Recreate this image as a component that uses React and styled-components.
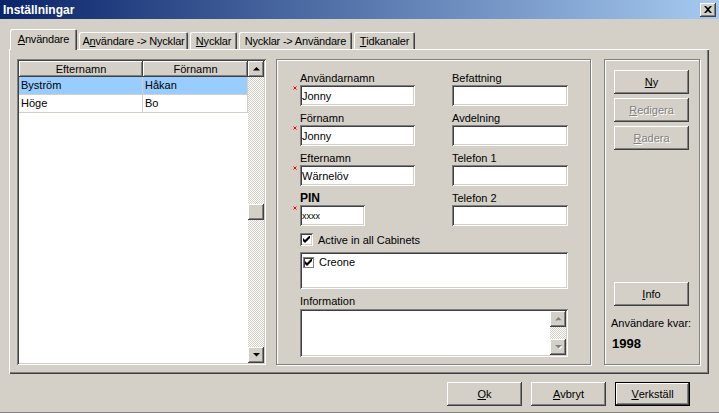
import React from "react"
import styled, { createGlobalStyle, css } from "styled-components"

const face = "#d4d0c8"
const shadow = "#808080"
const dark = "#404040"

const GlobalStyle = createGlobalStyle`
  html, body {
    margin: 0;
    padding: 0;
    background: ${face};
  }
  body {
    font-family: "Liberation Sans", Arial, sans-serif;
    font-size: 11px;
    color: #000;
  }
`

const raised = css`
  box-shadow: inset -1px -1px 0 ${dark}, inset 1px 1px 0 #fff, inset -2px -2px 0 ${shadow};
`

const sunken = css`
  box-shadow: inset 1px 1px 0 ${shadow}, inset -1px -1px 0 #fff, inset 2px 2px 0 ${dark}, inset -2px -2px 0 ${face};
`

const etched = css`
  border: 1px solid ${shadow};
  box-shadow: inset 1px 1px 0 #fff, 1px 1px 0 #fff;
`

const checkered = css`
  background: repeating-conic-gradient(${face} 0% 25%, #fff 0% 50%) 0 0 / 2px 2px;
`

const Window = styled.div`
  width: 719px;
  height: 413px;
  box-sizing: border-box;
  background: ${face};
  border-bottom: 1px solid ${shadow};
  display: flex;
  flex-direction: column;
`

const TitleBar = styled.div`
  height: 19px;
  flex: none;
  display: flex;
  align-items: center;
  justify-content: space-between;
  padding: 0 3px 0 3px;
  background: linear-gradient(to right, #0a246a, #a6caf0);
`

const Title = styled.span`
  color: #fff;
  font-weight: bold;
  font-size: 12px;
`

const CloseButton = styled.div`
  width: 16px;
  height: 14px;
  background: ${face};
  ${raised}
  display: flex;
  align-items: center;
  justify-content: center;
`

const Body = styled.div`
  flex: 1;
  display: flex;
  flex-direction: column;
  padding: 10px 10px 0 9px;
`

const TabStrip = styled.div`
  height: 20px;
  display: flex;
  align-items: flex-end;
  gap: 2px;
  padding-left: 1px;
  letter-spacing: -0.2px;
`

const Tab = styled.div`
  width: ${p => p.$w}px;
  height: ${p => (p.$active ? 21 : 17)}px;
  margin-bottom: ${p => (p.$active ? -1 : 0)}px;
  position: relative;
  z-index: ${p => (p.$active ? 1 : 0)};
  box-sizing: border-box;
  padding-bottom: ${p => (p.$active ? 2 : 0)}px;
  background: ${face};
  border-radius: 2px 2px 0 0;
  box-shadow: inset 1px 1px 0 #fff, inset -1px 0 0 ${dark}, inset -2px 0 0 ${shadow};
  display: flex;
  align-items: center;
  justify-content: center;
  white-space: nowrap;
`

const TabPanel = styled.div`
  height: 325px;
  box-sizing: border-box;
  padding: 10px 9px 9px 8px;
  box-shadow: inset 1px 1px 0 #fff, inset -1px -1px 0 ${dark}, inset -2px -2px 0 ${shadow};
  display: flex;
`

/* user list */

const UserList = styled.div`
  width: 249px;
  margin-right: 10px;
  box-sizing: border-box;
  padding: 2px;
  background: #fff;
  ${sunken}
  display: flex;
`

const Grid = styled.div`
  flex: 1;
  display: flex;
  flex-direction: column;
`

const HeaderRow = styled.div`
  display: flex;
  height: 16px;
`

const HeaderCell = styled.div`
  width: ${p => p.$w}px;
  box-sizing: border-box;
  background: ${face};
  ${raised}
  text-align: center;
  line-height: 16px;
`

const Row = styled.div`
  display: flex;
  height: 18px;
  background: ${p => (p.$selected ? "#99ccff" : "#fff")};
`

const Cell = styled.div`
  width: ${p => p.$w}px;
  box-sizing: border-box;
  padding-left: 2px;
  line-height: 17px;
  border-right: 1px solid ${face};
  border-bottom: 1px solid ${face};
`

const ScrollBar = styled.div`
  width: 16px;
  display: flex;
  flex-direction: column;
`

const ScrollButton = styled.div`
  width: 16px;
  height: 16px;
  flex: none;
  box-sizing: border-box;
  background: ${face};
  ${raised}
  display: flex;
  align-items: center;
  justify-content: center;
`

const Track = styled.div`
  flex: 1;
  ${checkered}
  display: flex;
  flex-direction: column;
`

const Thumb = styled.div`
  width: 16px;
  height: 16px;
  margin-top: ${p => p.$offset}px;
  background: ${face};
  ${raised}
`

/* form */

const FormGroup = styled.div`
  width: 315px;
  margin-right: 13px;
  box-sizing: border-box;
  ${etched}
  padding: 12px 0 0 23px;
  display: flex;
  flex-direction: column;
`

const FieldGrid = styled.div`
  display: grid;
  grid-template-columns: 115px 116px;
  column-gap: 37px;
  row-gap: 6px;
`

const Field = styled.div`
  display: flex;
  flex-direction: column;
`

const Label = styled.div`
  height: 13px;
  line-height: 13px;
  font-size: ${p => (p.$bold ? 12 : 11)}px;
  font-weight: ${p => (p.$bold ? "bold" : "normal")};
  white-space: nowrap;
`

const InputRow = styled.div`
  display: flex;
  margin-left: ${p => (p.$required ? -7 : 0)}px;
`

const Req = styled.svg`
  width: 7px;
  height: 5px;
  flex: none;
  margin-top: 1px;
`

const TextBox = styled.input`
  width: ${p => p.$w || 115}px;
  height: 21px;
  box-sizing: border-box;
  border: 0;
  outline: none;
  margin: 0;
  padding: 1px 0 0 2px;
  background: #fff;
  ${sunken}
  font-family: inherit;
  font-size: ${p => (p.$small ? 9 : 11)}px;
  color: #000;
`

const CheckRow = styled.label`
  display: flex;
  align-items: center;
  gap: 5px;
  margin-top: 7px;
  height: 13px;
`

const CheckBox = styled.span`
  width: 13px;
  height: 13px;
  flex: none;
  background: #fff;
  ${sunken}
  display: flex;
  align-items: center;
  justify-content: center;
`

const CabinetList = styled.div`
  width: 268px;
  height: 37px;
  margin-top: 6px;
  box-sizing: border-box;
  padding: 4px 3px;
  background: #fff;
  ${sunken}
`

const CabinetItem = styled.div`
  display: flex;
  align-items: center;
  gap: 5px;
  height: 12px;
`

const FlatCheck = styled.span`
  width: 11px;
  height: 11px;
  box-sizing: border-box;
  border: 1px solid ${shadow};
  box-shadow: inset 1px 1px 0 ${dark};
  display: flex;
  align-items: center;
  justify-content: center;
`

const InfoLabel = styled(Label)`
  margin-top: 6px;
  margin-bottom: 1px;
`

const MemoBox = styled.div`
  width: 268px;
  height: 48px;
  box-sizing: border-box;
  padding: 2px;
  background: #fff;
  ${sunken}
  display: flex;
  justify-content: flex-end;
`

/* side buttons */

const SideGroup = styled.div`
  width: 96px;
  box-sizing: border-box;
  ${etched}
  padding: 10px 0 12px 9px;
  display: flex;
  flex-direction: column;
  align-items: flex-start;
  gap: 4px;
`

const Button = styled.div`
  width: 75px;
  height: 24px;
  flex: none;
  box-sizing: border-box;
  background: ${face};
  ${p =>
    p.$default
      ? css`
          box-shadow: inset 0 0 0 1px #000, inset -2px -2px 0 ${dark}, inset 2px 2px 0 #fff, inset -3px -3px 0 ${shadow};
        `
      : raised}
  display: flex;
  align-items: center;
  justify-content: center;
  color: ${p => (p.$disabled ? shadow : "#000")};
  text-shadow: ${p => (p.$disabled ? "1px 1px 0 #fff" : "none")};
  margin-top: ${p => (p.$push ? "auto" : "0")};
`

const Key = styled.span`
  text-decoration: underline;
`

const Remaining = styled.div`
  margin: 6px 0 0 -3px;
  line-height: 14px;
  white-space: nowrap;
`

const Count = styled.div`
  margin: 2px 0 0 -2px;
  font-size: 13px;
  font-weight: bold;
  line-height: 16px;
`

const Footer = styled.div`
  display: flex;
  justify-content: flex-end;
  gap: 9px;
  padding: 8px 19px 0 0;
`

const Arrow = ({ down, muted }) => (
  <svg width="7" height="4" viewBox="0 0 7 4">
    {muted && (
      <polygon
        points={down ? "1,1 8,1 4.5,4.5" : "4.5,1 8,4.5 1,4.5"}
        fill="#fff"
      />
    )}
    <polygon
      points={down ? "0,0 7,0 3.5,3.5" : "3.5,0 7,3.5 0,3.5"}
      fill={muted ? shadow : "#000"}
    />
  </svg>
)

const Check = ({ size = 7 }) => (
  <svg width={size} height={size} viewBox="0 0 7 7">
    <path d="M0 2 L0 5 L2 7 L7 2 L7 -1 L2 4 Z" fill="#000" />
  </svg>
)

const RequiredMark = () => (
  <Req viewBox="0 0 7 5">
    <path d="M0.5 0.5 L3.5 3.5 M3.5 0.5 L0.5 3.5" stroke="#ff0000" strokeWidth="1" />
  </Req>
)

const tabs = [
  { w: 67, label: <><Key>A</Key>nvändare</> },
  { w: 109, label: <>A<Key>n</Key>vändare -&gt; Nycklar</> },
  { w: 47, label: <><Key>N</Key>ycklar</> },
  { w: 113, label: <>Nycklar -&gt; Användare</> },
  { w: 61, label: <><Key>T</Key>idkanaler</> },
]

const users = [
  { last: "Byström", first: "Håkan", selected: true },
  { last: "Höge", first: "Bo" },
]

const fields = [
  { label: "Användarnamn", value: "Jonny", required: true },
  { label: "Befattning" },
  { label: "Förnamn", value: "Jonny", required: true },
  { label: "Avdelning" },
  { label: "Efternamn", value: "Wärnelöv", required: true },
  { label: "Telefon 1" },
  { label: "PIN", value: "xxxx", required: true, bold: true, w: 65, small: true },
  { label: "Telefon 2" },
]

export default function App() {
  return (
    <>
      <GlobalStyle />
      <Window>
        <TitleBar>
          <Title>Inställningar</Title>
          <CloseButton>
            <svg width="8" height="7" viewBox="0 0 8 7">
              <path d="M0 0 L2 0 L4 2 L6 0 L8 0 L5 3.5 L8 7 L6 7 L4 5 L2 7 L0 7 L3 3.5 Z" fill="#000" />
            </svg>
          </CloseButton>
        </TitleBar>
        <Body>
          <TabStrip>
            {tabs.map((t, i) => (
              <Tab key={i} $w={t.w} $active={i === 0}>
                {t.label}
              </Tab>
            ))}
          </TabStrip>
          <TabPanel>
            <UserList>
              <Grid>
                <HeaderRow>
                  <HeaderCell $w={124}>Efternamn</HeaderCell>
                  <HeaderCell $w={105}>Förnamn</HeaderCell>
                </HeaderRow>
                {users.map(u => (
                  <Row key={u.last} $selected={u.selected}>
                    <Cell $w={124}>{u.last}</Cell>
                    <Cell $w={105}>{u.first}</Cell>
                  </Row>
                ))}
              </Grid>
              <ScrollBar>
                <ScrollButton>
                  <Arrow />
                </ScrollButton>
                <Track>
                  <Thumb $offset={127} />
                </Track>
                <ScrollButton>
                  <Arrow down />
                </ScrollButton>
              </ScrollBar>
            </UserList>

            <FormGroup>
              <FieldGrid>
                {fields.map(f => (
                  <Field key={f.label}>
                    <Label $bold={f.bold}>{f.label}</Label>
                    <InputRow $required={f.required}>
                      {f.required && <RequiredMark />}
                      <TextBox readOnly defaultValue={f.value || ""} $w={f.w || (f.required ? 115 : 116)} $small={f.small} />
                    </InputRow>
                  </Field>
                ))}
              </FieldGrid>
              <CheckRow>
                <CheckBox>
                  <Check />
                </CheckBox>
                Active in all Cabinets
              </CheckRow>
              <CabinetList>
                <CabinetItem>
                  <FlatCheck>
                    <Check size={7} />
                  </FlatCheck>
                  Creone
                </CabinetItem>
              </CabinetList>
              <InfoLabel>Information</InfoLabel>
              <MemoBox>
                <ScrollBar>
                  <ScrollButton>
                    <Arrow muted />
                  </ScrollButton>
                  <Track />
                  <ScrollButton>
                    <Arrow down muted />
                  </ScrollButton>
                </ScrollBar>
              </MemoBox>
            </FormGroup>

            <SideGroup>
              <Button><Key>N</Key>y</Button>
              <Button $disabled><Key>R</Key>edigera</Button>
              <Button $disabled><Key>R</Key>adera</Button>
              <Button $push><Key>I</Key>nfo</Button>
              <Remaining>Användare kvar:</Remaining>
              <Count>1998</Count>
            </SideGroup>
          </TabPanel>
          <Footer>
            <Button><Key>O</Key>k</Button>
            <Button><Key>A</Key>vbryt</Button>
            <Button $default><Key>V</Key>erkställ</Button>
          </Footer>
        </Body>
      </Window>
    </>
  )
}
